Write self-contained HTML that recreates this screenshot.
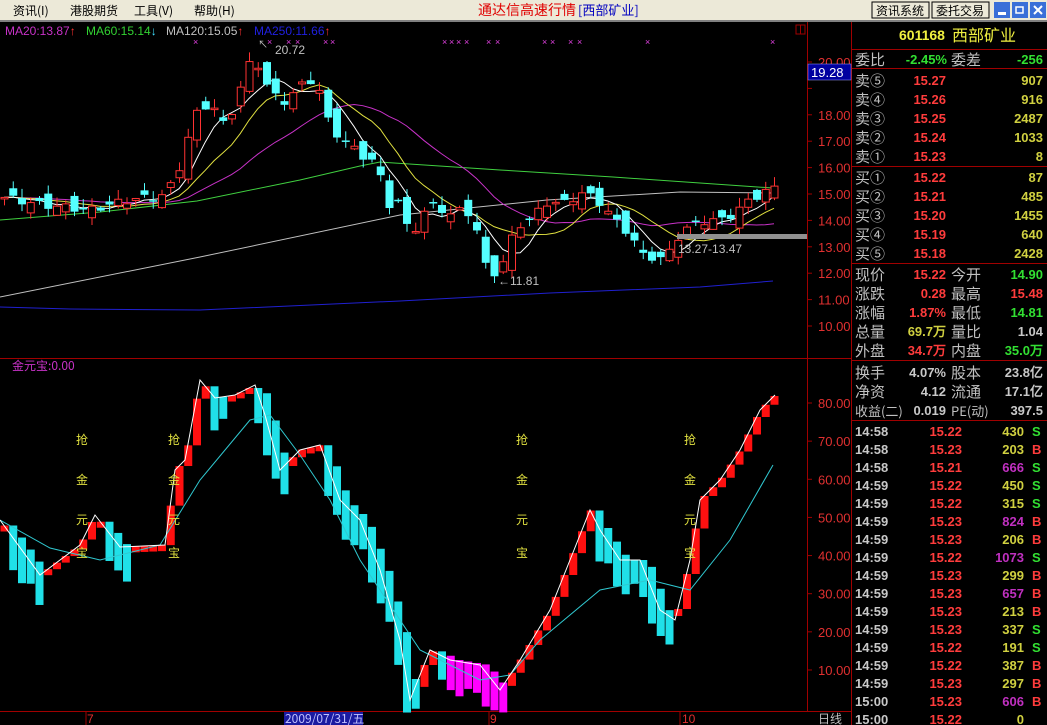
<!DOCTYPE html>
<html><head><meta charset="utf-8"><style>
html,body{margin:0;padding:0;background:#000;width:1047px;height:725px;overflow:hidden}
svg{display:block}
text{font-family:"Liberation Sans","Noto Sans CJK SC",sans-serif}
.cj{font-family:"Noto Sans CJK SC","WenQuanYi Zen Hei",sans-serif}
.n{font-family:"Liberation Sans",sans-serif;font-weight:bold;font-size:13px}
</style></head><body>
<svg id="s" width="1047" height="725" xmlns="http://www.w3.org/2000/svg">
<rect x="0" y="0" width="1047" height="725" fill="#000"/>
<rect x="0" y="0" width="1047" height="20" fill="#ece9d8"/>
<rect x="0" y="20" width="1047" height="2" fill="#808080"/>
<g font-size="12" fill="#000" class="cj">
<text x="13" y="15" class="cj">资讯(I)</text>
<text x="70" y="15" class="cj">港股期货</text>
<text x="134" y="15" class="cj">工具(V)</text>
<text x="194" y="15" class="cj">帮助(H)</text>
</g>
<text x="478" y="15" font-size="14" fill="#e00000" class="cj">通达信高速行情</text>
<text x="578" y="15" font-size="13" fill="#0000c0" class="cj">[西部矿业]</text>
<rect x="872" y="2" width="57" height="16" fill="#ece9d8" stroke="#000"/>
<text x="876" y="15" font-size="12" class="cj">资讯系统</text>
<rect x="932" y="2" width="57" height="16" fill="#ece9d8" stroke="#000"/>
<text x="936" y="15" font-size="12" class="cj">委托交易</text>
<rect x="994" y="2" width="16" height="16" fill="#3a6fd8"/><rect x="998" y="12" width="8" height="3" fill="#fff"/>
<rect x="1012" y="2" width="16" height="16" fill="#3a6fd8"/><rect x="1016" y="7" width="7" height="6" fill="none" stroke="#fff" stroke-width="1.5"/>
<rect x="1030" y="2" width="16" height="16" fill="#3a6fd8"/><path d="M1034 6 L1042 14 M1042 6 L1034 14" stroke="#fff" stroke-width="2"/>
<!-- frame -->
<line x1="807.5" y1="22" x2="807.5" y2="711" stroke="#a00000"/>
<line x1="851.5" y1="22" x2="851.5" y2="725" stroke="#a00000"/>
<line x1="0" y1="358.5" x2="851" y2="358.5" stroke="#a00000"/>
<line x1="0" y1="711.5" x2="851" y2="711.5" stroke="#a00000"/>
<rect x="796" y="25" width="9" height="9" fill="none" stroke="#a00000"/><line x1="800.5" y1="25" x2="800.5" y2="34" stroke="#a00000"/>
<g id="chart"></g>
<!-- legends -->
<g font-size="12">
<text x="5" y="35" fill="#c832c8">MA20:13.87<tspan fill="#ff3232">↑</tspan></text>
<text x="86" y="35" fill="#32d232">MA60:15.14<tspan fill="#40e0ff">↓</tspan></text>
<text x="166" y="35" fill="#c0c0c0">MA120:15.05<tspan fill="#ff3232">↑</tspan></text>
<text x="254" y="35" fill="#2020e0">MA250:11.66<tspan fill="#ff3232">↑</tspan></text>
<text x="12" y="370" fill="#c832c8" class="cj">金元宝:0.00</text>
<text x="275" y="54" fill="#c0c0c0">20.72</text>
<text x="258" y="48" fill="#c0c0c0" font-size="10">↖</text>
<text x="498" y="285" fill="#c0c0c0">←11.81</text>
<text x="678" y="253" fill="#c0c0c0">13.27-13.47</text>
</g>
<rect x="677" y="234" width="130" height="5" fill="#909090"/>
<g fill="#e0e040" font-size="12" class="cj" id="qj"></g>
<!-- axes labels -->
<g font-size="13" fill="#e03030" id="ax"></g>
<rect x="808" y="64" width="43" height="16" fill="#0000a0" stroke="#a0a0ff" stroke-width="0.5"/>
<text x="811" y="77" font-size="13" fill="#fff">19.28</text>
<!-- date axis -->
<g font-size="12" fill="#e03030">
<line x1="86" y1="712" x2="86" y2="725" stroke="#a00000"/><text x="87" y="723">7</text>
<rect x="284" y="712" width="79" height="13" fill="#1a1aa0"/><text x="285" y="723" fill="#c0c0ff" class="cj">2009/07/31/五</text>
<line x1="489" y1="712" x2="489" y2="725" stroke="#a00000"/><text x="490" y="723">9</text>
<line x1="680" y1="712" x2="680" y2="725" stroke="#a00000"/><text x="682" y="723">10</text>
<text x="818" y="723" fill="#c0c0c0" class="cj">日线</text>
</g>
<!-- right panel -->
<text x="899" y="40" fill="#f0f040" font-weight="bold" font-size="14">601168</text>
<text x="952" y="41" fill="#f0f040" font-size="16" class="cj">西部矿业</text>
<g stroke="#a00000">
<line x1="852" y1="49.5" x2="1047" y2="49.5"/><line x1="852" y1="68.5" x2="1047" y2="68.5"/>
<line x1="852" y1="166.5" x2="1047" y2="166.5"/><line x1="852" y1="263.5" x2="1047" y2="263.5"/>
<line x1="852" y1="360.5" x2="1047" y2="360.5"/><line x1="852" y1="420.5" x2="1047" y2="420.5"/>
</g>
<g id="rp"></g>
</svg>
<script>
var S='http://www.w3.org/2000/svg';
function el(p,t,a,txt){var e=document.createElementNS(S,t);for(var k in a)e.setAttribute(k,a[k]);if(txt!==undefined)e.textContent=txt;p.appendChild(e);return e;}
var C=document.getElementById('chart');
function interp(A,x){for(var i=0;i<A.length-1;i++){if(x<=A[i+1][0]){var t=(x-A[i][0])/(A[i+1][0]-A[i][0]);return A[i][1]+t*(A[i+1][1]-A[i][1]);}}return A[A.length-1][1];}
function py(p){return 62+(20-p)*26.4;}
var PA=[[0,14.9],[40,14.6],[90,14.4],[130,14.8],[160,14.9],[175,15.5],[185,16.8],[195,18],[210,18.5],[225,17.5],[240,19],[250,20],[258,19.9],[270,18.8],[285,18.5],[300,19.1],[315,19.4],[330,17.5],[345,17],[360,16.5],[375,16.2],[390,14.5],[400,14.8],[410,13.2],[420,14.2],[435,14.6],[450,14.2],[465,14.5],[475,13.8],[485,12.3],[495,12.0],[505,12.5],[515,13.8],[530,14],[545,14.7],[560,14.6],[580,15],[595,14.9],[605,14.4],[620,13.8],[630,13.5],[640,12.7],[655,12.6],[665,12.5],[675,13.3],[690,13.8],[705,14],[720,14],[735,14.3],[750,14.8],[765,15.1],[773,15.22]];
var N=89,dx=8.75,cl=[],xs=[];
for(var i=0;i<N;i++){var x=4+i*dx;xs.push(x);cl.push(interp(PA,x)+0.15*Math.sin(i*2.1));}
// long MAs
function poly(pts,col){el(C,'polyline',{points:pts.map(function(p){return p[0]+','+p[1]}).join(' '),fill:'none',stroke:col,'stroke-width':1});}
poly([[0,307],[70,309],[200,310],[400,301],[550,293],[700,287],[773,281]],'#2020d0');
poly([[0,297],[200,257],[400,215],[547,200],[680,192],[773,193]],'#c0c0c0');
poly([[0,220],[100,212],[197,201],[300,180],[360,166],[380,162],[500,170],[613,177],[700,183],[773,188]],'#40d040');
function ma(n){var r=[];for(var i=0;i<N;i++){var s=0;for(var j=0;j<n;j++){s+=cl[Math.max(0,i-j)];}r.push([xs[i],py(s/n)]);}return r;}
poly(ma(20),'#c832c8');poly(ma(10),'#e0e040');poly(ma(5),'#ffffff');
for(var i=0;i<N;i++){var c=cl[i],o=(i?cl[i-1]:c)+0.35*Math.sin(i*1.7);var hi=Math.max(o,c)+0.35*Math.abs(Math.sin(i*2.3)),lo=Math.min(o,c)-0.3*Math.abs(Math.cos(i*1.3));
var x=xs[i],up=c>=o,col=up?'#ff3232':'#54ffff';
el(C,'line',{x1:x+0.5,y1:py(hi),x2:x+0.5,y2:py(lo),stroke:col});
var t=py(Math.max(o,c)),b=py(Math.min(o,c));if(b-t<1.5)b=t+1.5;
if(up)el(C,'rect',{x:x-3,y:t,width:7,height:b-t,fill:'#000',stroke:col});else el(C,'rect',{x:x-3.5,y:t,width:8,height:b-t,fill:col});}
// x markers
[196,270,289,298,326,333,445,452,459,467,489,498,545,553,571,580,648,773].forEach(function(x){el(C,'text',{x:x-3,y:45,fill:'#e040e0','font-size':9},'×');});
// lower indicator
var WA=[[0,520],[40,575],[80,545],[95,515],[120,547],[165,545],[175,470],[185,460],[200,380],[215,398],[235,395],[255,385],[265,415],[280,470],[300,450],[320,445],[340,500],[360,520],[380,570],[400,640],[410,700],[430,650],[450,660],[480,665],[500,690],[520,660],[550,610],[570,560],[590,510],[600,530],[620,560],[640,560],[660,610],[675,620],[690,560],[700,500],[720,480],[740,450],[760,410],[775,395]];
var SA=[[0,520],[50,548],[100,560],[160,545],[200,480],[250,420],[270,415],[300,455],[330,500],[360,560],[420,650],[480,680],[510,675],[540,640],[600,590],[650,580],[690,590],[730,540],[773,465]];
var wv=[];for(var i=0;i<N;i++)wv.push(interp(WA,xs[i]));
for(var i=0;i<N;i++){var a=i?wv[i-1]:wv[i]+5,b=wv[i];var up=b<a;var col=up?'#ff1010':'#20e0e8';
var x=xs[i];if(x>445&&x<505&&!up)col='#ff00ff';
var t=Math.min(a,b),h=Math.abs(a-b);if(!up)h=h+20+15*Math.abs(Math.sin(i));if(h<6)h=6;
el(C,'rect',{x:x-3.5,y:t,width:8,height:h,fill:col});}
poly(SA,'#30c8d0');
poly(WA,'#ffffff');
// 抢金元宝
var Q=document.getElementById('qj');
[80,172,520,688].forEach(function(x){['抢','金','元','宝'].forEach(function(ch,k){el(Q,'text',{x:x-4,y:[444,484,524,557][k],class:'cj'},ch);});});
// axis labels
var AX=document.getElementById('ax');
for(var p=20;p>=10;p--){var y=py(p);el(AX,'line',{x1:808,y1:y,x2:812,y2:y,stroke:'#a00000'});if(p!=19)el(AX,'text',{x:818,y:y+5},p+'.00');}
for(var v=80;v>=10;v-=10){var y=403+(80-v)*3.814;el(AX,'line',{x1:808,y1:y,x2:812,y2:y,stroke:'#a00000'});el(AX,'text',{x:818,y:y+5},v+'.00');}
// right panel
var R=document.getElementById('rp');
function L(x,y,t,c,sz){el(R,'text',{x:x,y:y+6,fill:c||'#c0c0c0','font-size':sz||15,class:'cj'},t);}
function V(x,y,t,c){el(R,'text',{x:x,y:y+5,fill:c,'text-anchor':'end',class:'n'},t);}
var red='#ff3c3c',yel='#d0d040',grn='#32e032',mag='#c030c0',wh='#c8c8c8';
L(855,59,'委比');V(947,59,'-2.45%',grn);L(951,59,'委差');V(1043,59,'-256',grn);
var sl=[['卖⑤','15.27','907'],['卖④','15.26','916'],['卖③','15.25','2487'],['卖②','15.24','1033'],['卖①','15.23','8']];
sl.forEach(function(r,k){var y=80+k*19;L(855,y,r[0]);V(946,y,r[1],red);V(1043,y,r[2],yel);});
var bl=[['买①','15.22','87'],['买②','15.21','485'],['买③','15.20','1455'],['买④','15.19','640'],['买⑤','15.18','2428']];
bl.forEach(function(r,k){var y=177+k*19;L(855,y,r[0]);V(946,y,r[1],red);V(1043,y,r[2],yel);});
var q=[['现价','15.22',red,'今开','14.90',grn],['涨跌','0.28',red,'最高','15.48',red],['涨幅','1.87%',red,'最低','14.81',grn],['总量','69.7万',yel,'量比','1.04',wh],['外盘','34.7万',red,'内盘','35.0万',grn]];
q.forEach(function(r,k){var y=274+k*19;L(855,y,r[0]);V(946,y,r[1],r[2]);L(951,y,r[3]);V(1043,y,r[4],r[5]);});
var f=[['换手','4.07%','股本','23.8亿'],['净资','4.12','流通','17.1亿'],['收益(二)','0.019','PE(动)','397.5']];
f.forEach(function(r,k){var y=372+k*19;L(855,y,r[0],null,k==2?13:15);V(946,y,r[1],wh);L(951,y,r[2],null,k==2?13:15);V(1043,y,r[3],wh);});
var tk=[['14:58','15.22','430','S',yel],['14:58','15.23','203','B',yel],['14:58','15.21','666','S',mag],['14:59','15.22','450','S',yel],['14:59','15.22','315','S',yel],['14:59','15.23','824','B',mag],['14:59','15.23','206','B',yel],['14:59','15.22','1073','S',mag],['14:59','15.23','299','B',yel],['14:59','15.23','657','B',mag],['14:59','15.23','213','B',yel],['14:59','15.23','337','S',yel],['14:59','15.22','191','S',yel],['14:59','15.22','387','B',yel],['14:59','15.23','297','B',yel],['15:00','15.23','606','B',mag],['15:00','15.22','0','',yel]];
tk.forEach(function(r,k){var y=431+k*18;el(R,'text',{x:855,y:y+5,fill:wh,class:'n'},r[0]);V(962,y,r[1],red);V(1024,y,r[2],r[4]);if(r[3])el(R,'text',{x:1032,y:y+5,fill:r[3]=='S'?grn:red,class:'n'},r[3]);});
</script>
</body></html>
